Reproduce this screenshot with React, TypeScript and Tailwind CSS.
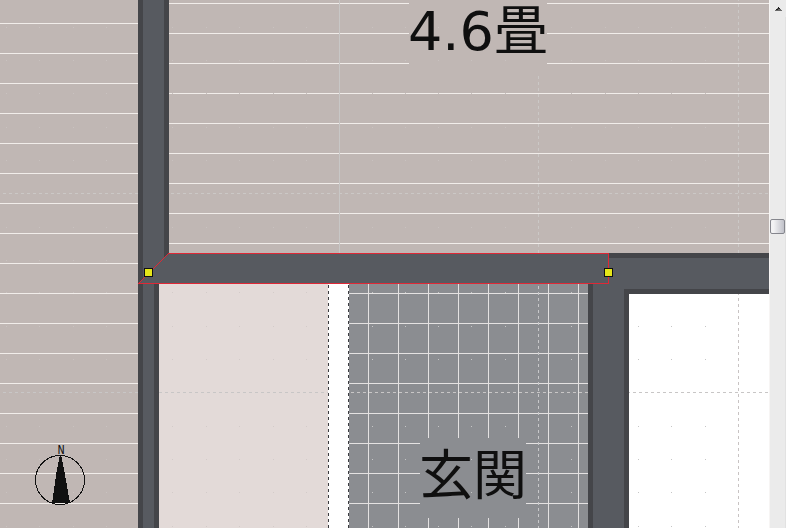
import React from 'react';

const FLOOR = '#c0b7b4';
const WALL = '#575a60';
const WALL_EDGE = '#444549';

const dotColumns = [6, 39, 73, 106, 172, 206, 239, 273, 306, 372, 405, 438, 471, 505, 571, 605, 638, 671, 705];
const dotRows = [27, 60, 93, 127, 160, 227, 260, 292, 326, 359, 426, 459, 492, 526];

function dotColor(x: number, y: number) {
  if (y < 284 || x < 138) return '#c9c2c0';
  if (x < 328) return '#d3cbc9';
  return '#c6c6c6';
}

function SnapDots() {
  return (
    <g>
      {dotRows.flatMap((y) =>
        dotColumns.map((x) => <rect key={`${x}-${y}`} x={x} y={y} width={1} height={1} fill={dotColor(x, y)} />),
      )}
    </g>
  );
}

function Handle({ x, y }: { x: number; y: number }) {
  return (
    <g>
      <rect x={x} y={y} width={9} height={9} fill="#111111" />
      <rect x={x + 1} y={y + 1} width={7} height={7} fill="#e5e619" />
    </g>
  );
}

function RoomLabel({ x, y, children }: { x: number; y: number; children: string }) {
  return (
    <text
      x={x}
      y={y}
      fill="#0f0f0f"
      className="font-['DejaVu_Sans','Noto_Sans_CJK_JP',sans-serif] text-[54px]"
    >
      {children}
    </text>
  );
}

function Compass() {
  return (
    <g>
      <text
        x={61}
        y={454}
        textAnchor="middle"
        fill="#111111"
        className="font-['Liberation_Mono',monospace] text-[12px]"
      >
        N
      </text>
      <circle cx={60} cy={480} r={24.5} fill="none" stroke="#111111" />
      <path d="M60 455h1l3 14 6 34H52l5-34z" fill="#111111" />
      <path d="M55 503.5h10" stroke="#f1edea" />
      <path d="M55 504.5h10" stroke="#111111" />
    </g>
  );
}

function FloorPlan() {
  return (
    <svg className="block h-full w-full" role="img" aria-label="間取り図" shapeRendering="crispEdges">
      <defs>
        <pattern id="boards-left" y={23} width={30} height={30} patternUnits="userSpaceOnUse">
          <rect width={30} height={30} fill={FLOOR} />
          <rect width={30} height={1} fill="#f1edea" />
        </pattern>
        <pattern id="boards-right" y={3} width={30} height={30} patternUnits="userSpaceOnUse">
          <rect width={30} height={30} fill={FLOOR} />
          <rect width={30} height={1} fill="#f1edea" />
        </pattern>
        <pattern id="tiles" x={368} y={293} width={30} height={30} patternUnits="userSpaceOnUse">
          <rect width={30} height={30} fill="#8b8d91" />
          <rect width={30} height={1} fill="#e4e2e2" />
          <rect width={1} height={30} fill="#e4e2e2" />
        </pattern>
      </defs>

      <rect width="100%" height="100%" fill="#ffffff" />
      <rect width={138} height="100%" fill="url(#boards-left)" />
      <rect x={169} width="100%" height={253} fill="url(#boards-right)" />
      <rect x={159} y={284} width={169} height="100%" fill="#e3dad8" />
      <rect x={349} y={284} width={239} height="100%" fill="url(#tiles)" />

      <rect x={409} width={138} height={76} fill={FLOOR} />
      <rect x={420} y={438} width={106} height={80} fill="#8b8d91" />

      <SnapDots />
      <g strokeDasharray="3 3">
        <line x1={3} x2="100%" y1={193.5} y2={193.5} stroke="#cbc8c6" />
        <line x1={3} x2="100%" y1={392.5} y2={392.5} stroke="#c8c6c6" />
        <line x1={538.5} x2={538.5} y1={76} y2={253} stroke="#cbc8c6" />
        <line x1={738.5} x2={738.5} y1={-2} y2={253} stroke="#cbc8c6" />
        <line x1={538.5} x2={538.5} y1={286} y2="100%" stroke="#c8c8ca" />
        <line x1={738.5} x2={738.5} y1={292} y2="100%" stroke="#c8c3c3" />
      </g>
      <rect x={328} y={284} width={21} height="100%" fill="#ffffff" />
      <g strokeDasharray="3 3" stroke="#3c3c40">
        <line x1={328.5} x2={328.5} y1={285} y2="100%" />
        <line x1={348.5} x2={348.5} y1={285} y2="100%" />
      </g>
      <rect x={339} width={1} height={253} fill="#c8c7c6" />

      <g fill={WALL_EDGE}>
        <rect x={138} width={31} height={284} />
        <rect x={138} y={283} width={21} height="100%" />
        <rect x={588} y={253} width={41} height="100%" />
        <rect x={609} y={253} width="100%" height={41} />
      </g>
      <g fill={WALL}>
        <rect x={143} width={21} height={284} />
        <rect x={143} y={283} width={11} height="100%" />
        <rect x={593} y={258} width={31} height="100%" />
        <rect x={593} y={258} width="100%" height={31} />
        <path d="M138 284 169 253H609V284Z" />
      </g>
      <path d="M138.5 283.5 168.5 253.5H608.5V283.5Z" fill="none" stroke="#df2836" />

      <Handle x={144} y={268} />
      <Handle x={604} y={268} />
      <RoomLabel x={408} y={50}>4.6畳</RoomLabel>
      <RoomLabel x={419} y={495}>玄関</RoomLabel>
      <Compass />
    </svg>
  );
}

function ScrollRail() {
  return (
    <div className="flex w-[17px] shrink-0 flex-col border-l border-[#f7f5f4] bg-[#ebebeb]">
      <button type="button" aria-label="上へスクロール" className="flex h-[17px] items-center justify-center">
        <svg width="7" height="4" viewBox="0 0 7 4" shapeRendering="crispEdges">
          <path d="M3 0h1v1h1v1h1v1h1v1H0V3h1V2h1V1h1z" fill="#6a6a6a" />
          <path d="M3 0h1v1h1v1H1v1h2V1H2z" fill="#222222" />
        </svg>
      </button>
      <div className="flex-1 border-r border-[#e2e2e2] pt-[202px]">
        <button
          type="button"
          aria-label="スクロール位置"
          className="block h-[15px] w-[15px] rounded-xs border border-[#85868d] bg-linear-to-r from-[#f2f2f3] from-20% to-[#c0c1c9]"
        />
      </div>
    </div>
  );
}

export default function App() {
  return (
    <main className="flex h-screen w-full overflow-hidden">
      <div className="min-w-0 flex-1">
        <FloorPlan />
      </div>
      <ScrollRail />
    </main>
  );
}
